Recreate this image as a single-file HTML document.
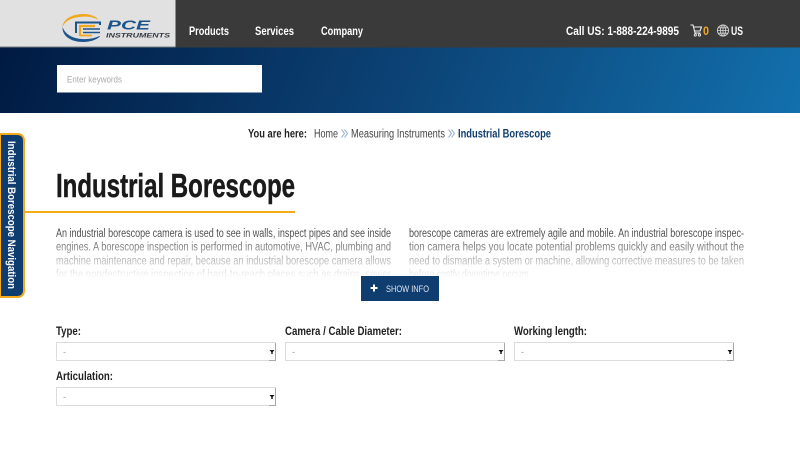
<!DOCTYPE html>
<html lang="en">
<head>
<meta charset="utf-8">
<title>Industrial Borescope</title>
<style>
html,body{margin:0;padding:0;background:#fff;width:800px;height:450px;overflow:hidden}
svg{display:block}
text{font-family:"Liberation Sans",sans-serif;white-space:pre}
.b{font-weight:bold}
.p{font-size:11.5px;fill:#333}
.l{font-size:11.5px;font-weight:bold;fill:#222}
.n{font-size:12px;font-weight:bold;fill:#fff}
</style>
</head>
<body>
<svg width="800" height="450" viewBox="0 0 800 450" xmlns="http://www.w3.org/2000/svg">
<defs>
<linearGradient id="hero" gradientUnits="userSpaceOnUse" x1="0" y1="47" x2="712" y2="332">
<stop offset="0" stop-color="#001a42"/>
<stop offset=".52" stop-color="#0c4477"/>
<stop offset="1" stop-color="#1270ad"/>
</linearGradient>
<linearGradient id="fade" x1="0" y1="0" x2="0" y2="1">
<stop offset="0" stop-color="#fff" stop-opacity="0"/>
<stop offset="1" stop-color="#fff" stop-opacity="1"/>
</linearGradient>
</defs>

<!-- header -->
<rect x="0" y="0" width="800" height="47.500" fill="#3a3a3a"/>
<rect x="0" y="0" width="175.500" height="47" fill="#e1e1e1"/>
<rect x="0" y="46.500" width="175.500" height="1" fill="#77797c"/>
<rect x="0" y="47.500" width="800" height="65.500" fill="url(#hero)"/>

<!-- logo -->
<path d="M62.500 27C63 19 72 14 84 14C90 14 95 16 98.500 19.500C92 16.800 87 16.200 81 16.800C71 17.800 65 21 62.500 27Z" fill="#f2a81d"/>
<path d="M62.500 27C62 36 71 42 83 42C90 42 96 40 100 36.500L99.500 36C94 38.600 88 39.400 82 39C72 38.300 65 34 62.500 27Z" fill="#1c548c"/>
<path d="M76 33V22.500H100V25" fill="none" stroke="#1c548c" stroke-width="2"/>
<path d="M80 36V26H95" fill="none" stroke="#f2a81d" stroke-width="2.200"/>
<path d="M83 29H100M83 32.500H100" fill="none" stroke="#1c548c" stroke-width="1.600"/>
<path d="M80 35.500H92" fill="none" stroke="#f2a81d" stroke-width="1.800"/>
<text x="107" y="29.500" class="b" font-size="12.500" font-style="italic" fill="#1c548c" textLength="43" lengthAdjust="spacingAndGlyphs">PCE</text>
<text x="106" y="37.300" class="b" font-size="6" font-style="italic" fill="#333a42" textLength="64" lengthAdjust="spacingAndGlyphs">INSTRUMENTS</text>

<!-- nav -->
<text x="189" y="35" class="n" textLength="40" lengthAdjust="spacingAndGlyphs">Products</text>
<text x="255" y="35" class="n" textLength="39" lengthAdjust="spacingAndGlyphs">Services</text>
<text x="321" y="35" class="n" textLength="42" lengthAdjust="spacingAndGlyphs">Company</text>
<text x="566" y="35" class="n" textLength="113" lengthAdjust="spacingAndGlyphs">Call US: 1-888-224-9895</text>

<!-- cart -->
<path d="M690.500 25H693L695 33H700.500M693.500 27H701.500L700 31H694.500" fill="none" stroke="#eee" stroke-width="1.100"/>
<circle cx="695.300" cy="35" r="1.100" fill="none" stroke="#eee" stroke-width=".9"/>
<circle cx="699.500" cy="35" r="1.100" fill="none" stroke="#eee" stroke-width=".9"/>
<text x="703" y="35" class="n" style="fill:#f5a91d" textLength="6" lengthAdjust="spacingAndGlyphs">0</text>

<!-- globe -->
<g fill="none" stroke="#d8d8d8" stroke-width=".8">
<circle cx="723" cy="30.500" r="5.600"/>
<ellipse cx="723" cy="30.500" rx="2.600" ry="5.600"/>
<path d="M723 25V36M717.500 30.500H728.500M718.300 27.800H727.700M718.300 33.200H727.700"/>
</g>
<text x="731" y="35" class="n" textLength="12" lengthAdjust="spacingAndGlyphs">US</text>

<!-- search -->
<rect x="57" y="65" width="205" height="27.500" fill="#fff"/>
<text x="67" y="82.300" font-size="9.500" fill="#aaa" textLength="55" lengthAdjust="spacingAndGlyphs">Enter keywords</text>

<!-- breadcrumb -->
<text x="248" y="137.500" class="b" font-size="11.500" fill="#222" textLength="59" lengthAdjust="spacingAndGlyphs">You are here:</text>
<text x="314" y="137.500" font-size="11.500" fill="#444" textLength="24" lengthAdjust="spacingAndGlyphs">Home</text>
<path d="M341.500 129.500L344.500 133.500L341.500 137.500M344.500 129.500L347.500 133.500L344.500 137.500" fill="none" stroke="#9db7d4" stroke-width="1.100"/>
<text x="351" y="137.500" font-size="11.500" fill="#444" textLength="94" lengthAdjust="spacingAndGlyphs">Measuring Instruments</text>
<path d="M448.500 129.500L451.500 133.500L448.500 137.500M451.500 129.500L454.500 133.500L451.500 137.500" fill="none" stroke="#9db7d4" stroke-width="1.100"/>
<text x="458" y="137.500" class="b" font-size="11.500" fill="#0f3d70" textLength="93" lengthAdjust="spacingAndGlyphs">Industrial Borescope</text>

<!-- title -->
<text x="56" y="197" class="b" font-size="33" fill="#1a1a1a" stroke="#1a1a1a" stroke-width=".5" textLength="239" lengthAdjust="spacingAndGlyphs">Industrial Borescope</text>
<rect x="25" y="211" width="270" height="2" fill="#f5a91d"/>

<!-- paragraph -->
<text x="56" y="237" class="p" textLength="335" lengthAdjust="spacingAndGlyphs">An industrial borescope camera is used to see in walls, inspect pipes and see inside</text>
<text x="56" y="250.700" class="p" textLength="335" lengthAdjust="spacingAndGlyphs">engines. A borescope inspection is performed in automotive, HVAC, plumbing and</text>
<text x="56" y="264.400" class="p" textLength="335" lengthAdjust="spacingAndGlyphs">machine maintenance and repair, because an industrial borescope camera allows</text>
<text x="56" y="278.100" class="p" textLength="335" lengthAdjust="spacingAndGlyphs">for the nondestructive inspection of hard-to-reach places such as drains, sewer</text>
<text x="409" y="237" class="p" textLength="335" lengthAdjust="spacingAndGlyphs">borescope cameras are extremely agile and mobile. An industrial borescope inspec-</text>
<text x="409" y="250.700" class="p" textLength="335" lengthAdjust="spacingAndGlyphs">tion camera helps you locate potential problems quickly and easily without the</text>
<text x="409" y="264.400" class="p" textLength="335" lengthAdjust="spacingAndGlyphs">need to dismantle a system or machine, allowing corrective measures to be taken</text>
<text x="409" y="278.100" class="p" textLength="122" lengthAdjust="spacingAndGlyphs">before costly downtime occurs.</text>
<rect x="50" y="226" width="700" height="52" fill="url(#fade)"/>
<rect x="50" y="277" width="700" height="8" fill="#fff"/>

<!-- show info -->
<rect x="361" y="276" width="78" height="25" fill="#0f3d70"/>
<path d="M370.500 288H377.500M374 284.500V291.500" stroke="#fff" stroke-width="2"/>
<text x="386" y="292" font-size="9.500" fill="#dfe6ee" textLength="43" lengthAdjust="spacingAndGlyphs">SHOW INFO</text>

<!-- side tab -->
<path d="M0 134H17Q24 134 24 141V290Q24 297 17 297H0Z" fill="#0f3d70" stroke="#f5a91d" stroke-width="2"/>
<text transform="translate(8 141) rotate(90)" class="b" font-size="11" fill="#fff" textLength="148" lengthAdjust="spacingAndGlyphs">Industrial Borescope Navigation</text>

<!-- filter labels -->
<text x="56" y="335" class="l" textLength="25" lengthAdjust="spacingAndGlyphs">Type:</text>
<text x="285" y="335" class="l" textLength="117" lengthAdjust="spacingAndGlyphs">Camera / Cable Diameter:</text>
<text x="514" y="335" class="l" textLength="73" lengthAdjust="spacingAndGlyphs">Working length:</text>
<text x="56" y="380" class="l" textLength="57" lengthAdjust="spacingAndGlyphs">Articulation:</text>

<!-- selects -->
<g fill="#fff" stroke="#dcdcdc" stroke-width="1">
<rect x="56.500" y="342.500" width="219" height="18"/>
<rect x="285.500" y="342.500" width="219" height="18"/>
<rect x="514.500" y="342.500" width="219" height="18"/>
<rect x="56.500" y="387.500" width="219" height="18"/>
</g>
<g fill="none" stroke="#a8a8a8" stroke-width="1">
<path d="M275.500 343V360.500H269"/>
<path d="M504.500 343V360.500H498"/>
<path d="M733.500 343V360.500H727"/>
<path d="M275.500 388V405.500H269"/>
</g>
<g fill="#111">
<path d="M269.500 350H274.500L272.700 352V354H271.300V352Z"/>
<path d="M498.500 350H503.500L501.700 352V354H500.300V352Z"/>
<path d="M727.500 350H732.500L730.700 352V354H729.300V352Z"/>
<path d="M269.500 395H274.500L272.700 397V399H271.300V397Z"/>
</g>
<g font-size="9" fill="#999">
<text x="63" y="355">-</text>
<text x="292" y="355">-</text>
<text x="521" y="355">-</text>
<text x="63" y="400">-</text>
</g>
</svg>
</body>
</html>
